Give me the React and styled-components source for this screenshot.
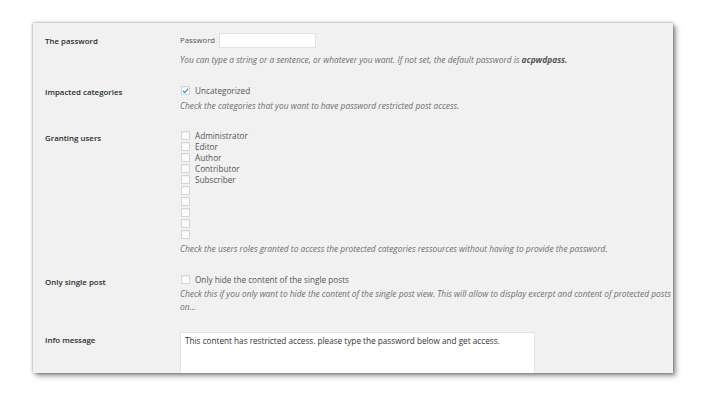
import React from "react";
import styled, { createGlobalStyle } from "styled-components";

const Global = createGlobalStyle`
  html, body { margin: 0; padding: 0; background: #ffffff; }
  body { font-family: "Open Sans", "Noto Sans", sans-serif; }
  #root { width: 711px; height: 403px; overflow: hidden; }
`;

const Page = styled.div`
  width: 711px;
  height: 403px;
  padding: 23px 0 0 33px;
  box-sizing: border-box;
`;

const Panel = styled.div`
  width: 640px;
  height: 350px;
  background: #f1f1f1;
  overflow: hidden;
  box-sizing: border-box;
  padding: 10px 0 0 12px;
  box-shadow: 0 0 3px rgba(0, 0, 0, 0.4), 3px 3px 5px rgba(0, 0, 0, 0.4);
`;

const Row = styled.div`
  display: grid;
  grid-template-columns: 135px 1fr;
  margin-bottom: ${(p) => p.$gap || 0}px;
`;

const Label = styled.div`
  font-weight: 600;
  font-size: 7.9px;
  line-height: 10px;
  padding-top: 3px;
  color: #2a2e32;
  white-space: nowrap;
`;

const Field = styled.div`
  display: flex;
  flex-direction: column;
  align-items: flex-start;
  min-width: 0;
`;

const InlineLabel = styled.label`
  display: flex;
  align-items: center;
  gap: 4px;
  font-size: 7.8px;
  color: #555;
  line-height: 15px;
`;

const TextInput = styled.div`
  width: 97px;
  height: 15px;
  background: #ffffff;
  border: 1px solid #e2e2e2;
  box-sizing: border-box;
`;

const Description = styled.p`
  margin: ${(p) => p.$top || 5}px 0 0;
  font-style: italic;
  font-size: 8.38px;
  line-height: 13px;
  color: #6e6e6e;
  white-space: nowrap;
  & b { font-weight: 700; color: #555; }
`;

const CheckList = styled.div`
  display: flex;
  flex-direction: column;
`;

const CheckRow = styled.label`
  display: flex;
  align-items: center;
  gap: 5px;
  height: ${(p) => p.$h || 11}px;
  font-size: 8.2px;
  color: #555;
  margin-left: 1px;
`;

const Box = styled.span`
  width: 9px;
  height: 9px;
  box-sizing: border-box;
  border: 1px solid #d6d6d6;
  background: #fcfcfc;
  box-shadow: inset 0 1px 1px rgba(0, 0, 0, 0.05);
  display: inline-flex;
  align-items: center;
  justify-content: center;
  flex: none;
`;

const TextArea = styled.div`
  width: 355px;
  height: 60px;
  background: #ffffff;
  border: 1px solid #e2e2e2;
  box-sizing: border-box;
  padding: 2px 4px;
  font-size: 8.2px;
  line-height: 11px;
  color: #333;
  white-space: nowrap;
`;

const Check = () => (
  <svg width="8" height="8" viewBox="0 0 16 16">
    <path d="M3 8.5 L6.5 12 L13 3.5" fill="none" stroke="#1e8cbe" strokeWidth="2.6" strokeLinecap="round" strokeLinejoin="round" />
  </svg>
);

const roles = ["Administrator", "Editor", "Author", "Contributor", "Subscriber", "", "", "", "", ""];

export default function App() {
  return (
    <>
      <Global />
      <Page>
        <Panel>
          <Row $gap={18}>
            <Label>The password</Label>
            <Field>
              <InlineLabel>
                Password <TextInput />
              </InlineLabel>
              <Description>
                You can type a string or a sentence, or whatever you want. If not set, the default password is <b>acpwdpass.</b>
              </Description>
            </Field>
          </Row>
          <Row $gap={18}>
            <Label>Impacted categories</Label>
            <Field>
              <CheckList>
                <CheckRow $h={13}>
                  <Box><Check /></Box>
                  Uncategorized
                </CheckRow>
              </CheckList>
              <Description $top={2}>Check the categories that you want to have password restricted post access.</Description>
            </Field>
          </Row>
          <Row $gap={19}>
            <Label>Granting users</Label>
            <Field>
              <CheckList>
                {roles.map((r, i) => (
                  <CheckRow key={i}>
                    <Box />
                    {r}
                  </CheckRow>
                ))}
              </CheckList>
              <Description $top={2}>
                Check the users roles granted to access the protected categories ressources without having to provide the password.
              </Description>
            </Field>
          </Row>
          <Row $gap={19}>
            <Label>Only single post</Label>
            <Field>
              <CheckList>
                <CheckRow $h={11}>
                  <Box />
                  Only hide the content of the single posts
                </CheckRow>
              </CheckList>
              <Description $top={2}>
                Check this if you only want to hide the content of the single post view. This will allow to display excerpt and content of protected posts
                <br />
                on...
              </Description>
            </Field>
          </Row>
          <Row>
            <Label>Info message</Label>
            <Field>
              <TextArea>This content has restricted access. please type the password below and get access.</TextArea>
            </Field>
          </Row>
        </Panel>
      </Page>
    </>
  );
}
